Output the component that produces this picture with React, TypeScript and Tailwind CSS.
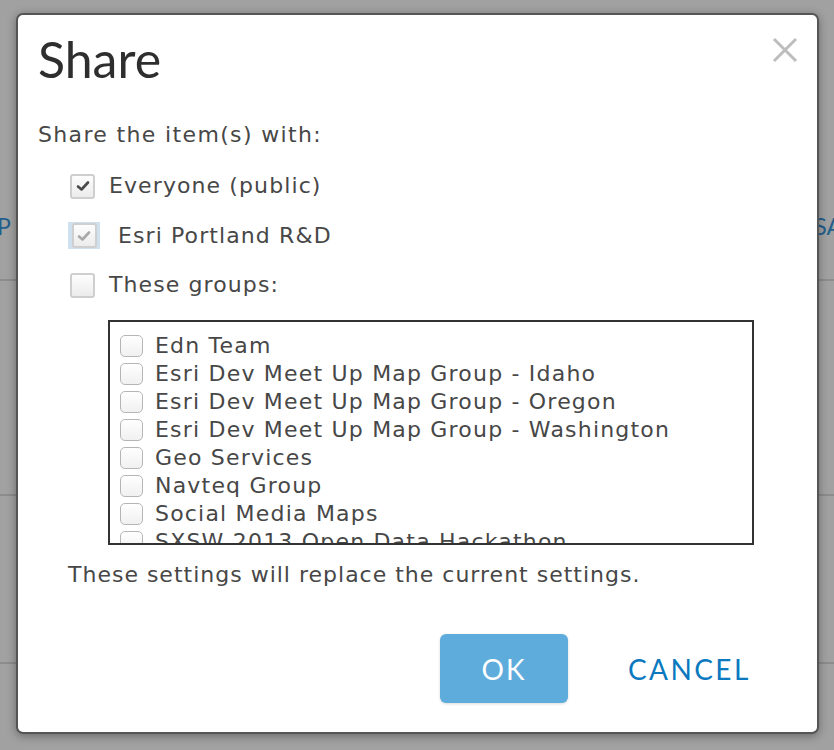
import React from "react";

const groups = [
  "Edn Team",
  "Esri Dev Meet Up Map Group - Idaho",
  "Esri Dev Meet Up Map Group - Oregon",
  "Esri Dev Meet Up Map Group - Washington",
  "Geo Services",
  "Navteq Group",
  "Social Media Maps",
  "SXSW 2013 Open Data Hackathon",
];

function Check({ checked, dim }: { checked?: boolean; dim?: boolean }) {
  return (
    <span className="flex h-[25px] w-[25px] shrink-0 items-center justify-center rounded-[3px] border-2 border-[#cfcfcf] bg-gradient-to-b from-[#fdfdfd] to-[#ececec]">
      {checked && (
        <svg width="14" height="12" viewBox="0 0 14 12">
          <path d="M2 6.5 L5.5 9.5 L12 2.5" fill="none" stroke={dim ? "#a8a8a8" : "#4a4a4a"} strokeWidth="2.6" strokeLinecap="round" strokeLinejoin="round" />
        </svg>
      )}
    </span>
  );
}

export default function App() {
  return (
    <div className="relative h-[750px] w-[834px] overflow-hidden bg-[#a1a1a1]" style={{ fontFamily: "'DejaVu Sans', Verdana, sans-serif" }}>
      <div className="relative h-[281px] border-b-2 border-[#8c8c8c]">
        <span className="absolute left-[-3px] top-[209px] text-[23px] text-[#235f8c]" style={{ fontFamily: "Lato, sans-serif" }}>P</span>
        <span className="absolute right-[-8px] top-[209px] text-[23px] text-[#235f8c]" style={{ fontFamily: "Lato, sans-serif" }}>SA</span>
      </div>
      <div className="h-[215px] border-b-2 border-[#8c8c8c]" />
      <div className="h-[168px] border-b-2 border-[#8c8c8c]" />

      <div className="absolute left-[16px] top-[13px] flex h-[721px] w-[803px] flex-col rounded-[7px] border-2 border-[#555] bg-white text-[#474747] shadow-[0_2px_10px_rgba(0,0,0,0.35)]">
        <div className="flex items-start justify-between pl-[20px] pr-[18px] pt-[14px]">
          <h1 className="text-[50px] leading-[60px] text-[#2e2e2e]" style={{ fontFamily: "Lato, sans-serif" }}>Share</h1>
          <svg width="28" height="28" viewBox="0 0 28 28" className="mt-[7px]">
            <path d="M3 3 L25 25 M25 3 L3 25" stroke="#bdbdbd" strokeWidth="3" />
          </svg>
        </div>

        <p className="mt-[33px] pl-[20px] text-[22px] leading-[26px] tracking-[1.35px]">Share the item(s) with:</p>

        <div className="mt-[25px] flex flex-col gap-[23px] pl-[52px]">
          <label className="flex h-[26px] items-center gap-[14px]">
            <Check checked />
            <span className="text-[22px] leading-[26px] tracking-[1.1px]">Everyone (public)</span>
          </label>
          <label className="flex h-[27px] items-center gap-[18px]">
            <span className="ml-[-2px] flex h-[27px] w-[32px] items-center justify-center bg-[#cfe0ee]">
              <Check checked dim />
            </span>
            <span className="text-[22px] leading-[26px] tracking-[1.1px]">Esri Portland R&amp;D</span>
          </label>
          <label className="flex h-[26px] items-center gap-[14px]">
            <Check />
            <span className="text-[22px] leading-[26px] tracking-[1.1px]">These groups:</span>
          </label>
        </div>

        <div className="ml-[90px] mt-[22px] h-[225px] w-[646px] shrink-0 overflow-hidden border-2 border-[#333] pl-[10px] pt-[10px]">
          {groups.map((g) => (
            <div key={g} className="flex h-[28px] items-center gap-[12px]">
              <span className="h-[22px] w-[23px] shrink-0 rounded-[5px] border border-[#b5b5b5] bg-gradient-to-b from-white to-[#f0f0f0]" />
              <span className="whitespace-nowrap text-[22px] leading-[28px] tracking-[1.2px]">{g}</span>
            </div>
          ))}
        </div>

        <p className="mt-[17px] pl-[50px] text-[22px] leading-[26px] tracking-[1px]">These settings will replace the current settings.</p>

        <div className="mt-[46px] flex items-center pl-[422px]">
          <button className="h-[69px] w-[128px] rounded-[6px] bg-[#5eacdc] text-[28px] tracking-[2px] text-white shadow-[0_1px_3px_rgba(0,0,0,0.15)]" style={{ fontFamily: "Lato, sans-serif" }}>OK</button>
          <button className="ml-[60px] text-[28px] tracking-[2.4px] text-[#0a79c0]" style={{ fontFamily: "Lato, sans-serif" }}>CANCEL</button>
        </div>
      </div>
    </div>
  );
}
